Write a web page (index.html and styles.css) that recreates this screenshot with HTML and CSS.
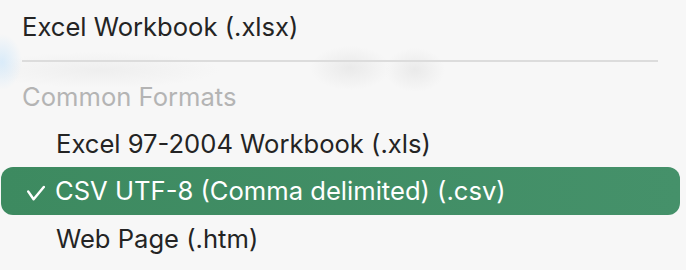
FILE: index.html
```html
<!DOCTYPE html>
<html lang="en">
<head>
<meta charset="utf-8">
<title>Save As Formats</title>
<link rel="stylesheet" href="styles.css">
</head>
<body>
<div class="menu">
  <div class="row top">Excel Workbook (.xlsx)</div>
  <div class="sep"></div>
  <div class="row header">Common Formats</div>
  <div class="row item">Excel 97-2004 Workbook (.xls)</div>
  <div class="row item selected">
    <svg class="check" width="18" height="24" viewBox="0 0 18 24"><polyline points="1.3,12.6 6.6,20.2 16.8,8" fill="none" stroke="#fff" stroke-width="2.5" stroke-linecap="round" stroke-linejoin="round"/></svg>
    <span>CSV UTF-8 (Comma delimited) (.csv)</span>
  </div>
  <div class="row item">Web Page (.htm)</div>
</div>
</body>
</html>
```
FILE: styles.css
```css
html, body {
  margin: 0;
  padding: 0;
}
body {
  width: 686px;
  height: 270px;
  overflow: hidden;
  background:
    radial-gradient(ellipse 20px 28px at 2px 62px, rgba(205,230,250,0.7), rgba(205,230,250,0) 100%),
    radial-gradient(ellipse 40px 22px at 350px 68px, rgba(225,225,225,0.6), rgba(225,225,225,0) 100%),
    radial-gradient(ellipse 30px 22px at 415px 70px, rgba(225,225,225,0.6), rgba(225,225,225,0) 100%),
    radial-gradient(ellipse 120px 18px at 100px 70px, rgba(230,230,230,0.5), rgba(230,230,230,0) 100%),
    #f7f7f7;
  font-family: Inter, "Noto Sans", sans-serif;
  font-size: 25.6px;
  color: #242424;
}
.menu {
  padding-top: 3px;
  display: flex;
  flex-direction: column;
}
.row {
  height: 47px;
  line-height: 47px;
  white-space: nowrap;
}
.top {
  padding-left: 22px;
}
.sep {
  height: 2px;
  background: #dcdcdc;
  margin: 10px 28px 11px 22px;
}
.header {
  padding-left: 22px;
  color: #b4b4b4;
}
.item {
  padding-left: 56px;
}
.selected {
  height: 48px;
  line-height: 48px;
  margin: 0 6px 0 1px;
  padding-left: 26px;
  border-radius: 12px;
  background: linear-gradient(90deg, #3d8a60, #45916a);
  color: #fff;
  display: flex;
  align-items: center;
  gap: 10px;
}
.check {
  flex: none;
}
```
